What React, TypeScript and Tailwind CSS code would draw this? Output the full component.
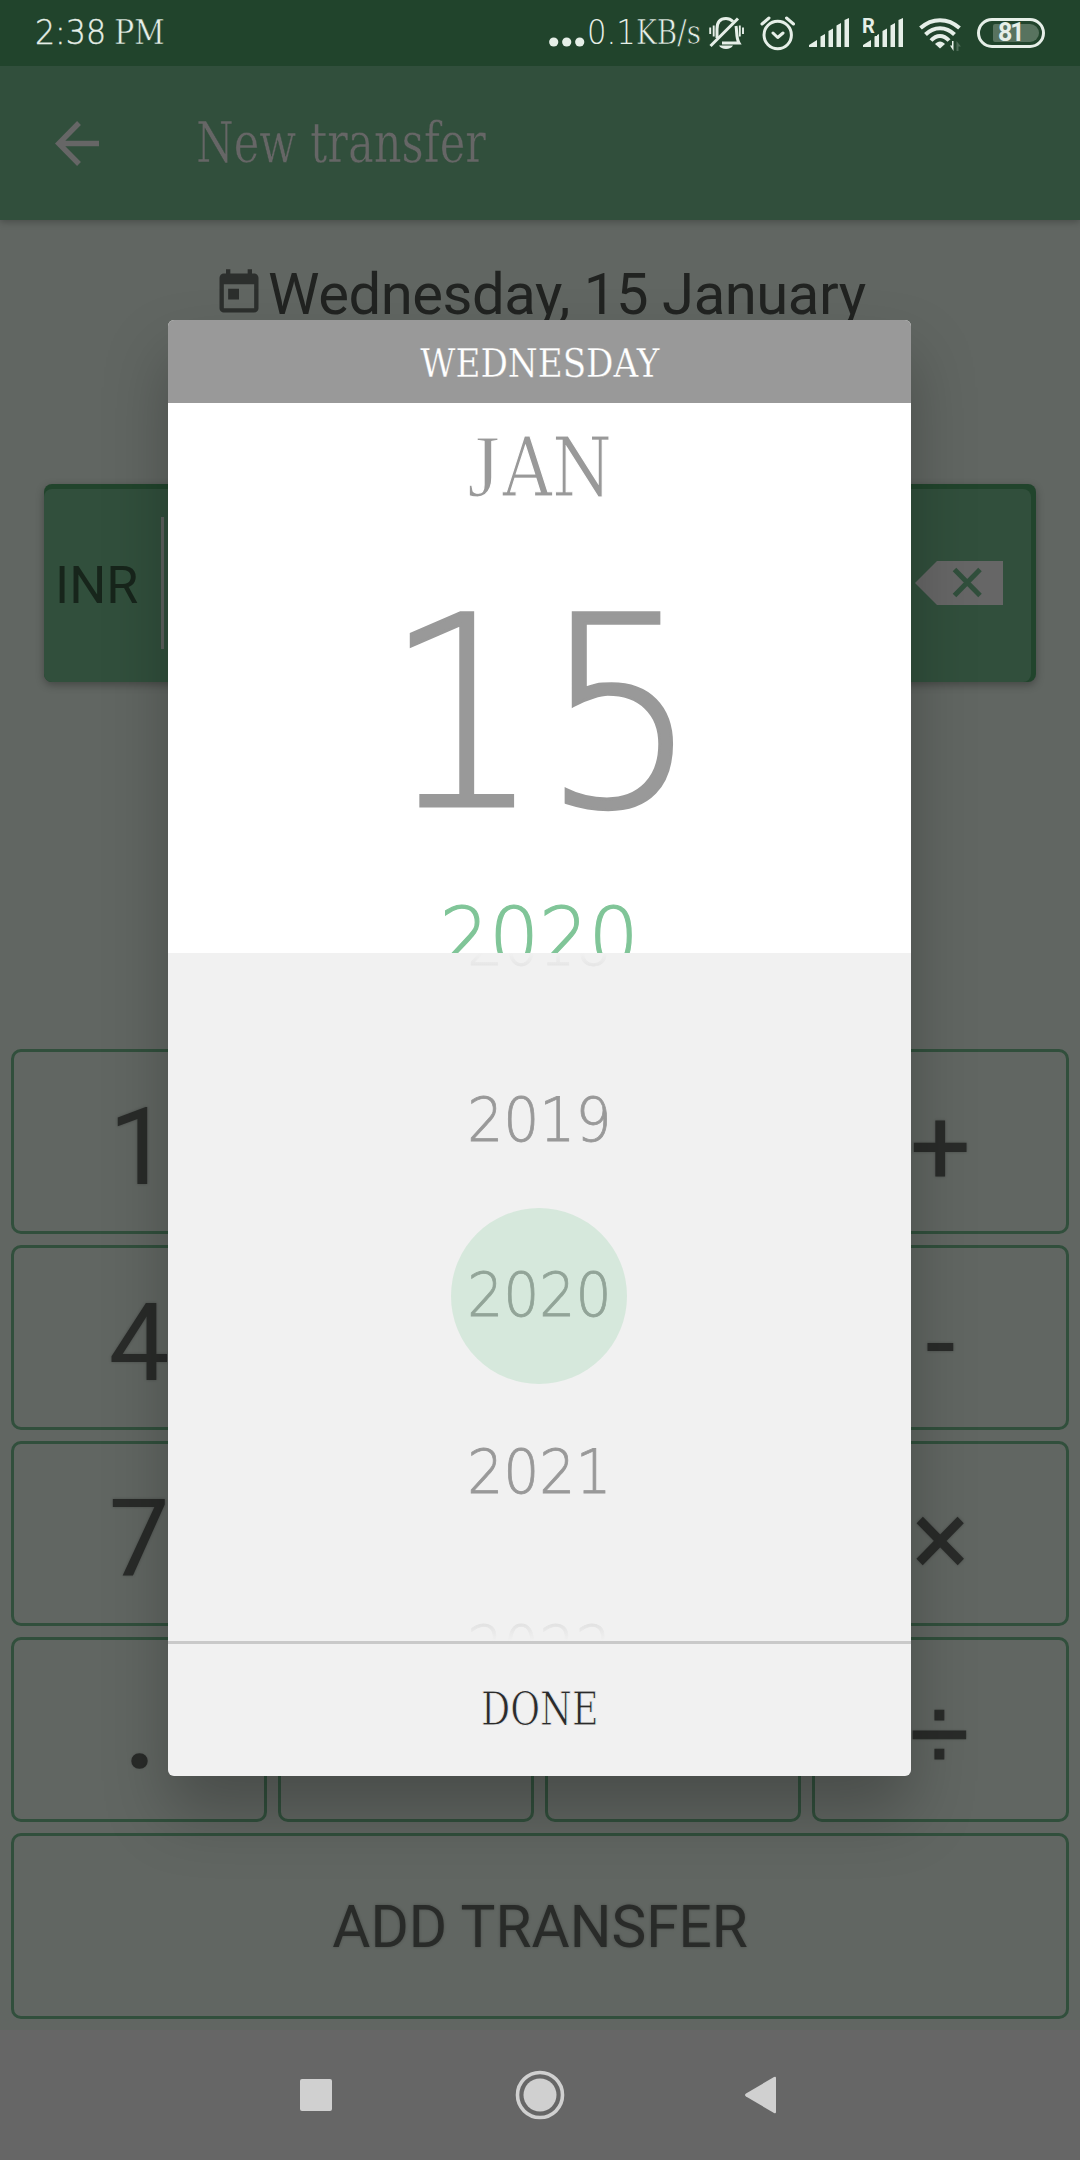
import React from "react";
import { MdToday } from "react-icons/md";

const slab = "font-['DejaVu_Serif_Condensed','DejaVu_Serif',serif] [font-stretch:condensed] whitespace-pre";
const digits = "font-['DejaVu_Sans_Light','DejaVu_Sans',sans-serif] font-extralight whitespace-pre";

function SignalBars() {
  return (
    <svg width="41" height="30" viewBox="0 0 41 30" fill="#e6efe8">
      <path d="M0 29V27L8 22V29ZM11.5 29V18.5L16 16V29ZM19.5 29V13L24 10.5V29ZM27.5 29V7.5L32 5V29ZM35.5 29V2L40 0V29Z" />
    </svg>
  );
}

function StatusBar() {
  return (
    <div className="relative z-10 flex h-[66px] items-start bg-[#21442c] text-[#e6efe8]">
      <div className={`${digits} ml-[35px] mt-[12px] w-[514px] text-[34px] leading-[40px] [-webkit-text-stroke:0.4px_#e6efe8]`}>
        <span className="inline-block origin-left scale-x-[0.93]">2:38</span>
        <span className={`${slab} ml-[3px] inline-block origin-left text-[33px] font-normal [-webkit-text-stroke:0.5px_#21442c]`}>PM</span>
      </div>
      <svg className="mt-[37px]" width="36" height="10" viewBox="0 0 36 10" fill="#e6efe8">
        <circle cx="4.7" cy="5" r="4.6" />
        <circle cx="17.7" cy="5" r="4.6" />
        <circle cx="30.7" cy="5" r="4.6" />
      </svg>
      <div className={`${digits} ml-[2px] mt-[12px] w-[123px] text-[34px] leading-[40px]`}>
        <span className="inline-block origin-left scale-x-[0.9]">0.1</span>
        <span className={`${slab} -ml-[5px] inline-block origin-left scale-x-[0.94] text-[33px] font-normal [-webkit-text-stroke:0.7px_#21442c]`}>KB/s</span>
      </div>
      <svg className="-ml-px mt-[16px]" width="36" height="35" viewBox="0 0 36 35" fill="none" stroke="#e6efe8" strokeWidth="3">
        <path d="M8 22V13C8 6 11 2.5 17 2.5C20 2.5 22 3.5 24 5.5M27 10C28 14 27 22 30 27H13" />
        <path d="M1.5 30L29 2.5" />
        <path d="M10 29.500H24C22 34 12 34 10 29.500Z" fill="#e6efe8" stroke="none" />
        <path d="M1.200 11.500V18M4.700 9.500V20.500M30.800 9.500V20.500M34 11.500V18" strokeWidth="1.900" />
      </svg>
      <svg className="ml-[15px] mt-[15px]" width="36" height="36" viewBox="0 0 36 36" fill="none" stroke="#e6efe8" strokeWidth="3" strokeLinecap="round" strokeLinejoin="round">
        <circle cx="17.700" cy="20" r="13.700" />
        <path d="M13 18L17.700 22.500L23 18M2 9L9 3M33.500 9L26.500 3" />
      </svg>
      <div className="ml-[13px] mt-[18px]"><SignalBars /></div>
      <div className="relative ml-[13px] mt-[18px] h-[30px] w-[41px]">
        <SignalBars />
        <span className="absolute -left-px -top-[2px] h-[20px] w-[15px] bg-[#21442c] font-['Roboto',sans-serif] text-[20px] font-bold leading-[20px]">R</span>
      </div>
      <svg className="ml-[15px] mt-[17px]" width="44" height="35" viewBox="0 0 44 35" fill="none" stroke="#e6efe8" strokeWidth="4">
        <path d="M1.500 11C13 .5 29 .5 40.500 11M6.500 17.500C15 9 27 9 35.500 17.500M12 23.500C17.500 17.500 24.500 17.500 30 23.500" />
        <path d="M16 27C19 23.500 23 23.500 26 27L21 31.500Z" fill="#e6efe8" stroke="none" />
        <path d="M34.500 24V34L31 28.500H33V24Z" fill="#e6efe8" stroke="none" />
        <path d="M37.500 34V24L42 29.500H39.500V34Z" fill="#4d6a56" stroke="none" />
      </svg>
      <div className="ml-[14px] mt-[18px] flex h-[30px] w-[68px] items-center rounded-full border-[3px] border-[#e6efe8] pl-[13px]">
        <div className="flex h-[18px] w-[46px] items-center rounded-l-[2px] rounded-r-[9px] bg-[#58735f] pl-[5px] font-['Roboto',sans-serif] text-[25px] font-bold leading-[18px] tracking-[-2px]">81</div>
      </div>
    </div>
  );
}

function Toolbar() {
  return (
    <div className="relative flex h-[154px] items-start bg-[#314f3c] text-[#666666] shadow-[0_2px_7px_rgba(0,0,0,0.25)]">
      <svg className="ml-[55px] mt-[55px]" width="45" height="45" viewBox="0 0 45 45" fill="none" stroke="#666666" strokeWidth="5.400">
        <path d="M44 22.500H4M24 2L3.700 22.500L24 43" />
      </svg>
      <h1 className={`${slab} ml-[96px] mt-[42px] text-[56px] leading-[70px] [-webkit-text-stroke:0.5px_#314f3c]`}>
        <span className="inline-block origin-left scale-x-[0.857]">New transfer</span>
      </h1>
    </div>
  );
}

function AmountCard() {
  return (
    <div className="mx-[44px] mt-[133px] h-[198px] rounded-[8px] bg-[#21442c] pr-[5px] pt-[5px] shadow-[0_3px_9px_rgba(0,0,0,0.3)]">
      <div className="flex h-[193px] items-start rounded-[8px] bg-[#314f3c]">
        <span className="ml-[11px] mt-[67px] w-[106px] font-['Roboto',sans-serif] text-[52px] leading-[60px] text-[#17251b]">INR</span>
        <div className="mt-[28px] h-[132px] w-[3px] bg-[#5d615e]" />
        <svg className="ml-auto mr-[28px] mt-[72px]" width="88" height="44" viewBox="0 0 88 44">
          <path d="M0 22L22 0H88V44H22Z" fill="#666666" />
          <path d="M39.500 8.500L65 34.500M65 8.500L39.500 34.500" stroke="#314f3c" strokeWidth="5" />
        </svg>
      </div>
    </div>
  );
}

const keys = ["1", "2", "3", "+", "4", "5", "6", "-", "7", "8", "9", "×", ".", "0", "=", "÷"];
const keyStyle =
  "flex items-center justify-center rounded-[10px] border-[3px] border-[#314f3c] text-[#292b29] [text-shadow:0_0_3px_rgba(0,0,0,0.25)]";

function keyFont(k: string) {
  if (k === "÷") return "font-['Liberation_Sans',sans-serif] pt-[9px] pr-[2px] [-webkit-text-stroke:1px_#292b29]";
  if (k === ".") return "font-['Roboto',sans-serif] font-medium pl-[2px] [-webkit-text-stroke:1.5px_#292b29]";
  return "font-['Roboto',sans-serif] pt-[10px]";
}

function Keypad() {
  return (
    <div className="grid grid-cols-[256px_256px_256px_257px] gap-[11px] px-[11px]">
      {keys.map((k) => (
        <div key={k} className={`${keyStyle} ${keyFont(k)} h-[185px] text-[108px]`}>{k}</div>
      ))}
      <div className={`${keyStyle} col-span-4 h-[186px] pt-[4px] font-['Roboto',sans-serif] text-[58.5px]`}>ADD TRANSFER</div>
    </div>
  );
}

function NavBar() {
  return (
    <div className="flex h-[130px] items-center bg-[#666666]">
      <div className="ml-[300px] h-[32px] w-[32px] rounded-[2px] bg-[#d0d0d0]" />
      <svg className="ml-[183px]" width="50" height="50" viewBox="0 0 50 50">
        <circle cx="25" cy="25" r="22.500" fill="none" stroke="#d0d0d0" strokeWidth="3.600" />
        <circle cx="25" cy="25" r="16.500" fill="#d0d0d0" />
      </svg>
      <svg className="ml-[180px]" width="32" height="38" viewBox="0 0 32 38" fill="#d0d0d0">
        <path d="M1 17.500L29 1Q31 0 31 2V36Q31 38 29 37L1 20.500Q-1 19 1 17.500Z" />
      </svg>
    </div>
  );
}

function YearRow({ year, color }: { year: string; color: string }) {
  return (
    <div className={`flex h-[176px] shrink-0 items-center justify-center pb-px ${color}`}>
      <span className={`${digits} inline-block scale-x-[0.945] text-[60px] leading-[61px] [-webkit-text-stroke:0.8px_currentColor]`}>{year}</span>
    </div>
  );
}

function DateDialog() {
  return (
    <div className="absolute left-[168px] top-[320px] z-20 h-[1456px] w-[743px] rounded-[6px] shadow-[0_36px_64px_rgba(0,0,0,0.25)]">
      <div className="flex h-full flex-col overflow-hidden rounded-[6px] bg-[#f1f1f1]">
        <div className={`${slab} flex h-[83px] shrink-0 items-center justify-center bg-[#999999] pt-[2px] text-[40px] text-white [-webkit-text-stroke:0.3px_#999999]`}>
          <span className="inline-block scale-x-[0.95]">WEDNESDAY</span>
        </div>
        <div className="flex h-[550px] shrink-0 flex-col items-center overflow-hidden bg-white text-[#999999]">
          <span className={`${slab} mt-[15px] inline-block scale-x-[0.93] text-[82px] leading-[100px] [-webkit-text-stroke:1.2px_white]`}>
            <span className="mr-[3px] font-['Liberation_Serif',serif] text-[89px] leading-[90px]">J</span>AN
          </span>
          <span className={`${digits} ml-[4px] mt-[56px] inline-block scale-x-[0.935] text-[265px] leading-[280px] [-webkit-text-stroke:3px_currentColor]`}>15</span>
          <span className={`${digits} mt-[38px] inline-block scale-x-[0.965] text-[81px] leading-[90px] text-[#80c598] [-webkit-text-stroke:1.2px_currentColor]`}>2020</span>
        </div>
        <div className="relative flex h-[688px] shrink-0 flex-col justify-center overflow-hidden pr-px">
          <YearRow year="2018" color="text-[#999999]" />
          <YearRow year="2019" color="text-[#999999]" />
          <div className="mx-auto -mt-px mb-px flex w-[176px] justify-center rounded-full bg-[#d6e8dc]">
            <YearRow year="2020" color="text-[#92a498]" />
          </div>
          <YearRow year="2021" color="text-[#999999]" />
          <YearRow year="2022" color="text-[#999999]" />
          <div className="absolute inset-x-0 top-0 h-[40px] bg-linear-to-b from-[#f1f1f1] to-[#f1f1f1]/60" />
          <div className="absolute inset-x-0 bottom-0 h-[40px] bg-linear-to-t from-[#f1f1f1] to-[#f1f1f1]/60" />
        </div>
        <div className="h-[3px] shrink-0 bg-[#c9c9c9]" />
        <div className={`${slab} flex flex-1 items-center justify-center pb-[2px] text-[46px] text-[#2b2b2b] [-webkit-text-stroke:0.8px_#f1f1f1]`}>
          <span className="inline-block scale-x-[0.88]">DONE</span>
        </div>
      </div>
    </div>
  );
}

export default function App() {
  return (
    <div className="relative flex h-[2160px] w-[1080px] flex-col overflow-hidden bg-[#616662]">
      <StatusBar />
      <Toolbar />
      <div className="flex h-[131px] items-start pl-[213px] pt-[38px] font-['Roboto',sans-serif] text-[#212321]">
        <MdToday className="mt-[9px]" size={52} color="#2c2f2d" />
        <span className="ml-[3px] text-[58px] leading-[72px] tracking-[-0.45px] whitespace-pre">Wednesday, 15 January</span>
      </div>
      <AmountCard />
      <div className="flex flex-1 flex-col justify-end pb-[11px]">
        <Keypad />
      </div>
      <NavBar />
      <DateDialog />
    </div>
  );
}
